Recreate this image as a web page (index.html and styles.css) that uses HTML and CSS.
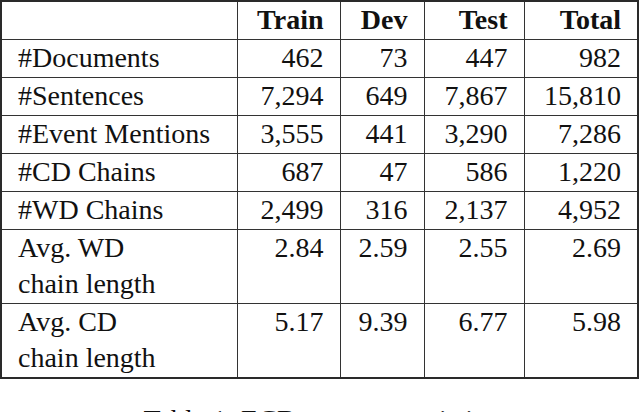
FILE: index.html
```html
<!DOCTYPE html>
<html lang="en">
<head>
    <meta charset="UTF-8">
    <meta name="viewport" content="width=device-width, initial-scale=1.0">
    <title>ECB+ corpus statistics</title>
    <link rel="stylesheet" href="styles.css">
</head>
<body>
    <div class="figure">
        <table class="stats">
            <colgroup>
                <col class="col-label">
                <col class="col-train">
                <col class="col-dev">
                <col class="col-test">
                <col class="col-total">
            </colgroup>
            <thead>
                <tr>
                    <th></th>
                    <th>Train</th>
                    <th>Dev</th>
                    <th>Test</th>
                    <th>Total</th>
                </tr>
            </thead>
            <tbody>
                <tr>
                    <td>#Documents</td>
                    <td>462</td>
                    <td>73</td>
                    <td>447</td>
                    <td>982</td>
                </tr>
                <tr>
                    <td>#Sentences</td>
                    <td>7,294</td>
                    <td>649</td>
                    <td>7,867</td>
                    <td>15,810</td>
                </tr>
                <tr>
                    <td>#Event Mentions</td>
                    <td>3,555</td>
                    <td>441</td>
                    <td>3,290</td>
                    <td>7,286</td>
                </tr>
                <tr>
                    <td>#CD Chains</td>
                    <td>687</td>
                    <td>47</td>
                    <td>586</td>
                    <td>1,220</td>
                </tr>
                <tr>
                    <td>#WD Chains</td>
                    <td>2,499</td>
                    <td>316</td>
                    <td>2,137</td>
                    <td>4,952</td>
                </tr>
                <tr>
                    <td>Avg. WD<br>chain length</td>
                    <td>2.84</td>
                    <td>2.59</td>
                    <td>2.55</td>
                    <td>2.69</td>
                </tr>
                <tr>
                    <td>Avg. CD<br>chain length</td>
                    <td>5.17</td>
                    <td>9.39</td>
                    <td>6.77</td>
                    <td>5.98</td>
                </tr>
            </tbody>
        </table>
        <p class="caption">Table 1: ECB+ corpus statistics</p>
    </div>
</body>
</html>
```

FILE: styles.css
```css
body {
    margin: 0;
    background: #fff;
    color: #111;
    overflow: hidden;
}
.figure {
    font-family: "Liberation Serif", serif;
    font-size: 28px;
}
.stats {
    width: 639px;
    border-collapse: collapse;
    border: 2px solid #2a2a2a;
    table-layout: fixed;
    font-family: "Liberation Serif", serif;
    font-size: 28px;
}
.col-label { width: 236px; }
.col-train { width: 103px; }
.col-dev { width: 84px; }
.col-test { width: 100px; }
.col-total { width: 114px; }
.stats th,
.stats td {
    border: 1px solid #333;
    font-family: "Liberation Serif", serif;
    line-height: 36px;
    padding: 0 16px 1px 16px;
    text-align: right;
    vertical-align: top;
    white-space: nowrap;
}
.stats th {
    font-weight: bold;
}
.stats td:first-child {
    text-align: left;
}
.caption {
    margin: 23px 0 0;
    font-family: "Liberation Serif", serif;
    line-height: 36px;
    text-align: center;
}
```
